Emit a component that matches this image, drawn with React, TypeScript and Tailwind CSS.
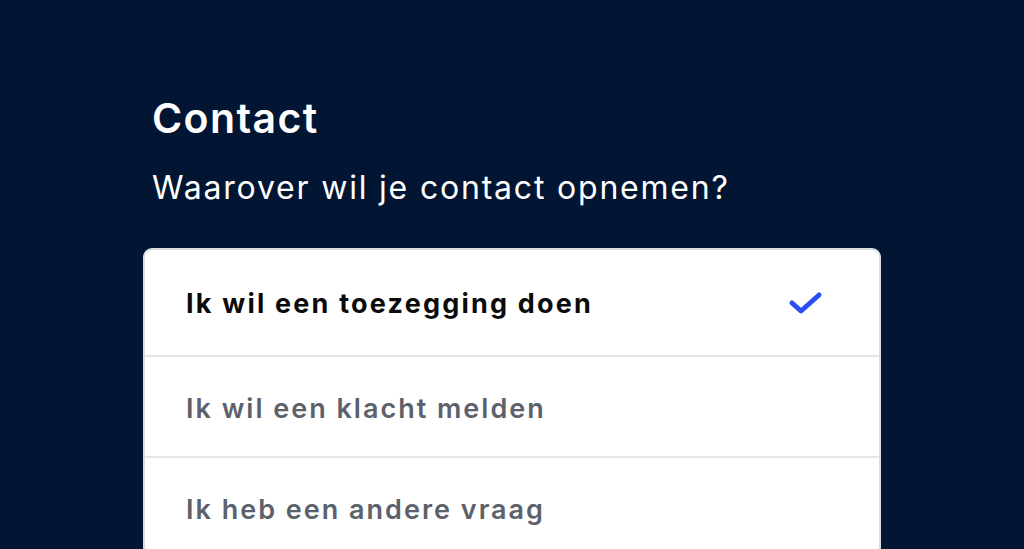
const options = [
  { label: "Ik wil een toezegging doen", selected: true },
  { label: "Ik wil een klacht melden", selected: false },
  { label: "Ik heb een andere vraag", selected: false },
]

export default function App() {
  return (
    <div className="h-[549px] w-[1024px] overflow-hidden bg-[#021633] font-['Inter','Noto_Sans',sans-serif]">
      <div className="pl-[143px] pt-[92px]">
        <h1 className="pl-[9px] text-[41px] font-semibold leading-[52px] tracking-[1.4px] text-white">
          Contact
        </h1>
        <p className="mt-[23px] pl-[9px] text-[32px] leading-[42px] tracking-[1.8px] text-white">
          Waarover wil je contact opnemen?
        </p>
        <div className="mt-[39px] w-[738px] overflow-hidden rounded-[9px] border-[2px] border-[#d9dbe0] bg-white">
          {options.map((o, i) => (
            <div
              key={o.label}
              className={
                "flex items-center justify-between pl-[41px] pr-[55px] " +
                (i === 0 ? "h-[105px] pt-[3px] " : "h-[101px] pt-[6px] ") +
                (i > 0 ? "border-t-[2px] border-[#e5e6e8]" : "")
              }
            >
              <span
                className={
                  o.selected
                    ? "text-[27px] font-bold tracking-[2.2px] text-[#0b0b0b]"
                    : "text-[27px] font-semibold tracking-[2px] text-[#5b626c]"
                }
              >
                {o.label}
              </span>
              {o.selected && (
                <svg width="36" height="26" viewBox="0 0 36 26" className="mb-[2px]">
                  <path
                    d="M4 13 L13 21 L31 5"
                    fill="none"
                    stroke="#2a4ef3"
                    strokeWidth="5"
                    strokeLinecap="round"
                    strokeLinejoin="round"
                  />
                </svg>
              )}
            </div>
          ))}
        </div>
      </div>
    </div>
  )
}
